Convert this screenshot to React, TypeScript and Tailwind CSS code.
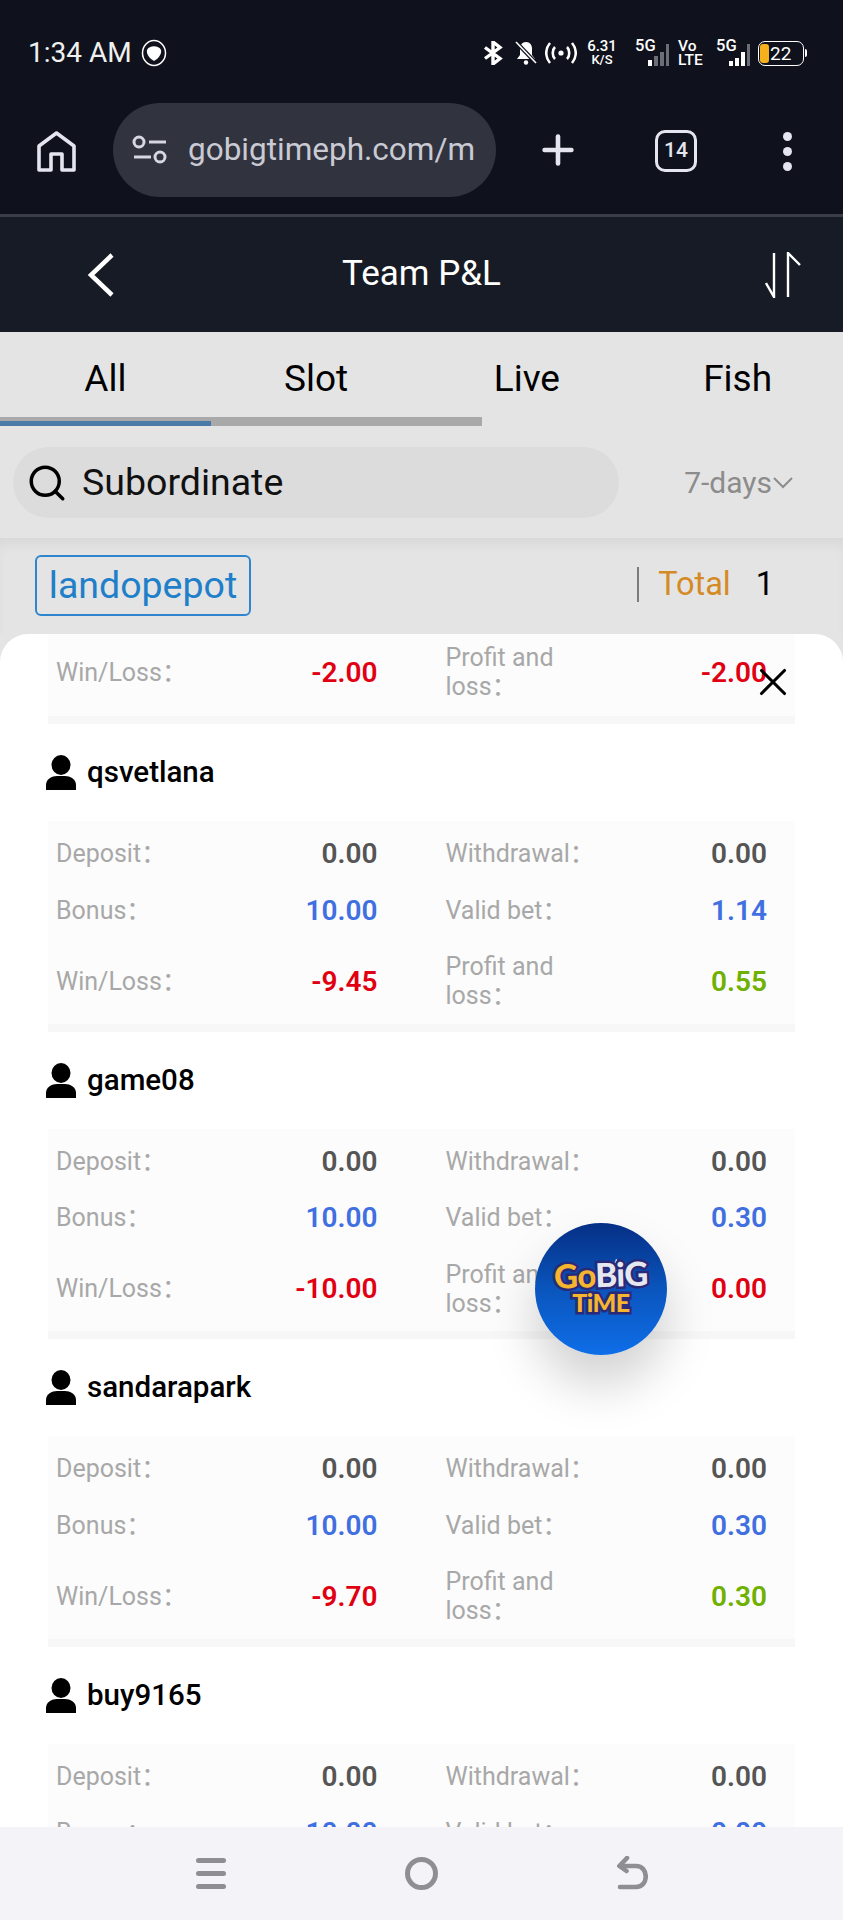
import React from 'react';
import { Search, X, Plus } from 'lucide-react';

type Cell = { label: string; value: string; color: string };

const gray = 'text-[#555555]';
const blue = 'text-[#3f6fe0]';
const red = 'text-[#e00012]';
const green = 'text-[#6fb000]';

const makeRows = (winLoss: string, validBet: string, profit: string, profitColor: string): Cell[][] => [
  [
    { label: 'Deposit', value: '0.00', color: gray },
    { label: 'Withdrawal', value: '0.00', color: gray },
  ],
  [
    { label: 'Bonus', value: '10.00', color: blue },
    { label: 'Valid bet', value: validBet, color: blue },
  ],
  [
    { label: 'Win/Loss', value: winLoss, color: red },
    { label: 'Profit and loss', value: profit, color: profitColor },
  ],
];

const members = [
  { name: 'qsvetlana', rows: makeRows('-9.45', '1.14', '0.55', green) },
  { name: 'game08', rows: makeRows('-10.00', '0.30', '0.00', red) },
  { name: 'sandarapark', rows: makeRows('-9.70', '0.30', '0.30', green) },
  { name: 'buy9165', rows: makeRows('-10.00', '0.00', '0.00', red).slice(0, 2) },
];

const StatRow = ({ cells }: { cells: Cell[] }) => (
  <div className="mb-[27.5px] grid grid-cols-2 gap-x-[68px] last:mb-0">
    {cells.map((cell) => (
      <div key={cell.label} className="flex items-center justify-between">
        <span className="max-w-[160px] text-[25px] leading-[29px] text-[#a8a8a8]">
          {cell.label}
          <span className="font-['Noto_Sans_CJK_SC',sans-serif] leading-none">{'\uFF1A'}</span>
        </span>
        <span className={`text-[28px] leading-[29px] font-semibold ${cell.color}`}>{cell.value}</span>
      </div>
    ))}
  </div>
);

const UserIcon = () => (
  <svg width="30" height="35" viewBox="0 0 30 35" fill="black">
    <ellipse cx="15" cy="10" rx="9.500" ry="10" />
    <path d="M0 35v-5c0-6 6-9 11-9h8c5 0 11 3 11 9v5z" />
  </svg>
);

const StatusBar = () => (
  <div className="flex h-[102px] items-center justify-between pt-[4px] pr-[36px] pl-[28px] text-white">
    <div className="flex items-center gap-[9px]">
      <span className="text-[28px] text-[#f0f0f0]">1:34 AM</span>
      <svg width="26" height="28" viewBox="0 0 26 28" fill="none">
        <ellipse cx="13" cy="14" rx="11.500" ry="12.500" stroke="white" strokeWidth="1.5" />
        <path d="M6 11c2-5 12-5 14 0 1 4-3 9-7 11-4-2-8-7-7-11z" fill="white" />
      </svg>
    </div>
    <div className="flex items-center">
      <svg width="20" height="24" viewBox="0 0 20 24" fill="none" stroke="white" strokeWidth="3.4" className="mr-[12px]">
        <path d="M2 6.5l15 11-7 5.5V1l7 5.5-15 11" />
      </svg>
      <svg width="22" height="24" viewBox="0 0 22 24" className="mr-[8px]">
        <path d="M11 1c-4 0-6 3-6 7v6l-3 4h18l-3-4V8c0-4-2-7-6-7z" fill="white" />
        <circle cx="11" cy="21.5" r="2.2" fill="white" />
        <path d="M1 1l20 21" stroke="#0f121c" strokeWidth="4" />
        <path d="M1 1l20 21" stroke="white" strokeWidth="1.6" />
      </svg>
      <svg width="32" height="24" viewBox="0 0 32 24" fill="none" stroke="white" strokeWidth="2.6" className="mr-[10px]">
        <circle cx="16" cy="12" r="2.6" fill="white" stroke="none" />
        <path d="M10 6c-3 3-3 9 0 12M22 6c3 3 3 9 0 12M5 2c-5 6-5 14 0 20M27 2c5 6 5 14 0 20" />
      </svg>
      <div className="mr-[18px] flex w-[30px] flex-col items-center text-[15px] leading-[14px] font-medium">
        <span>6.31</span>
        <span className="text-[13px]">K/S</span>
      </div>
      <div className="relative mr-[9px] h-[26px] w-[34px]">
        <span className="absolute -top-[2px] left-0 text-[16.5px] leading-[16px] font-medium">5G</span>
        <div className="absolute right-0 bottom-0 flex items-end gap-[2px]">
          <i className="h-[6px] w-[4px] bg-white" />
          <i className="h-[10px] w-[4px] bg-[#6b6e75]" />
          <i className="h-[14px] w-[4px] bg-[#6b6e75]" />
          <i className="h-[22px] w-[3px] bg-[#6b6e75]" />
        </div>
      </div>
      <div className="mr-[14px] flex w-[24px] flex-col text-[15.5px] leading-[14px] font-medium">
        <span>Vo</span>
        <span>LTE</span>
      </div>
      <div className="relative mr-[8px] h-[26px] w-[34px]">
        <span className="absolute -top-[2px] left-0 text-[16.5px] leading-[16px] font-medium">5G</span>
        <div className="absolute right-0 bottom-0 flex items-end gap-[2px]">
          <i className="h-[5px] w-[4px] bg-white" />
          <i className="h-[8px] w-[4px] bg-white" />
          <i className="h-[14px] w-[4px] bg-white" />
          <i className="h-[22px] w-[3px] bg-[#6b6e75]" />
        </div>
      </div>
      <div className="flex items-center">
        <div className="relative flex h-[25px] w-[46px] items-center rounded-[7px] border-[1.5px] border-white pl-[1px]">
          <i className="h-[19px] w-[9px] rounded-[3px] bg-[#f5b01c]" />
          <span className="ml-[1px] text-[19px] leading-none">22</span>
        </div>
        <i className="ml-[1px] h-[8px] w-[2px] rounded-r bg-white" />
      </div>
    </div>
  </div>
);

const BrowserBar = () => (
  <div className="flex h-[115px] items-start border-b-[3px] border-[#3a3d45] pt-[1px]">
    <div className="flex w-[113px] justify-start pt-[27px] pl-[37px]">
      <svg width="39" height="42" viewBox="0 0 39 42" fill="none" stroke="#e4e5ee" strokeWidth="3.6">
        <path d="M2 40V16L19.5 3 37 16v24H25V24H14v16z" strokeLinejoin="round" />
      </svg>
    </div>
    <div className="flex h-[94px] w-[383px] items-center rounded-full bg-[#31333f] pl-[19px]">
      <svg width="36" height="30" viewBox="0 0 36 30" fill="none" stroke="#d5d6df" strokeWidth="3">
        <circle cx="7" cy="7" r="5" />
        <path d="M17 7h17M2 22h17" />
        <circle cx="28" cy="22" r="5" />
      </svg>
      <span className="ml-[20px] text-[31.5px] whitespace-nowrap text-[#c9cad3]">gobigtimeph.com/m</span>
    </div>
    <Plus size={46} strokeWidth={2.4} className="mt-[24px] ml-[39px] text-[#e4e5ee]" />
    <div className="mt-[27px] ml-[74px] flex h-[42px] w-[42px] items-center justify-center rounded-[10px] border-[3.5px] border-[#e4e5ee] text-[21px] font-medium text-[#e4e5ee]">
      14
    </div>
    <div className="mt-[29px] ml-[86px] flex flex-col gap-[6px]">
      <i className="h-[9px] w-[9px] rounded-full bg-[#e4e5ee]" />
      <i className="h-[9px] w-[9px] rounded-full bg-[#e4e5ee]" />
      <i className="h-[9px] w-[9px] rounded-full bg-[#e4e5ee]" />
    </div>
  </div>
);

const Header = () => (
  <div className="grid h-[115px] grid-cols-[1fr_auto_1fr] items-center bg-[#171b25] pr-[42px] pl-[87px] text-white">
    <svg width="27" height="44" viewBox="0 0 27 44" fill="none" stroke="white" strokeWidth="4.5">
      <path d="M25 2L4 22l21 20" />
    </svg>
    <span className="-ml-[45px] text-[35px]">Team P&amp;L</span>
    <svg width="36" height="46" viewBox="0 0 36 46" fill="none" stroke="white" strokeWidth="2.4" className="justify-self-end">
      <path d="M9 1v44L1 31M23 45V1l12 12" />
    </svg>
  </div>
);

const FloatingLogo = () => (
  <div className="absolute top-[1223px] left-[535px] flex h-[132px] w-[132px] flex-col items-center justify-center overflow-hidden rounded-full bg-gradient-to-b from-[#062f85] via-[#0a55bd] to-[#0f6ee8] pb-[4px] font-['Lato',sans-serif] font-black shadow-[0_30px_50px_rgba(0,0,0,0.18)]">
    <span className="absolute top-[34px] left-[74px] text-[16px] leading-none text-white">★</span>
    <div className="-rotate-2 text-[33px] leading-[30px] tracking-[-0.5px] [paint-order:stroke_fill] [-webkit-text-stroke:5px_#2a2a78]">
      <span className="text-[#f6b52e]">Go</span>
      <span className="text-[#e6e8f0]">BiG</span>
    </div>
    <div className="text-[25px] leading-[26px] tracking-[-0.5px] text-[#f6b52e] [paint-order:stroke_fill] [-webkit-text-stroke:5px_#2a2a78]">
      TiME
    </div>
  </div>
);

const NavBar = () => (
  <div className="flex h-[93px] items-center justify-between bg-[#f3f3f8] pr-[195px] pb-[1px] pl-[196px]">
    <div className="flex flex-col gap-[8px]">
      <i className="h-[5px] w-[30px] rounded-full bg-[#8e8e93]" />
      <i className="h-[5px] w-[30px] rounded-full bg-[#8e8e93]" />
      <i className="h-[5px] w-[30px] rounded-full bg-[#8e8e93]" />
    </div>
    <div className="h-[33px] w-[33px] rounded-full border-[5px] border-[#8e8e93]" />
    <svg width="31" height="34" viewBox="0 0 31 34" fill="none" stroke="#8e8e93" strokeWidth="4.6" strokeLinecap="round">
      <path d="M3 31h16c13 0 13-21 0-21H3" />
      <path d="M10 2L2.500 10l7 5" />
    </svg>
  </div>
);

const App: React.FC = () => {
  return (
    <div className="relative flex h-[1920px] w-[843px] flex-col overflow-hidden bg-[#e4e4e4] font-['Roboto',sans-serif]">
      <div className="bg-[#0f121c]">
        <StatusBar />
        <BrowserBar />
      </div>
      <Header />

      <div className="bg-[#e4e4e4]">
        <div className="grid grid-cols-4 pt-[8px]">
          {['All', 'Slot', 'Live', 'Fish'].map((tab) => (
            <div key={tab} className="flex h-[77px] items-center justify-center text-[37px] text-black">
              {tab}
            </div>
          ))}
        </div>
        <div className="h-[9px] w-[482px] bg-[#a9a9a9] pt-[4px]">
          <div className="h-[5px] w-[211px] bg-[#4a7ba8]" />
        </div>
        <div className="flex items-center pt-[21px] pr-[50px] pb-[20px] pl-[13px]">
          <div className="flex h-[71px] w-[606px] items-center rounded-full bg-[#dcdcdc] pl-[13px]">
            <Search size={42} strokeWidth={2} className="text-black" />
            <span className="ml-[14px] text-[37.5px] text-[#111111]">Subordinate</span>
          </div>
          <span className="ml-auto text-[30px] text-[#8c8c8c]">7-days</span>
          <svg width="20" height="12" viewBox="0 0 20 12" fill="none" stroke="#8c8c8c" strokeWidth="2" className="ml-[1px]">
            <path d="M1 1l9 9 9-9" />
          </svg>
        </div>
        <div className="flex h-[96px] items-start bg-[#e4e4e4] pt-[17px] pr-[69px] pl-[35px] shadow-[inset_0_10px_14px_-6px_rgba(0,0,0,0.07)]">
          <div className="flex h-[61px] w-[216px] items-center justify-center rounded-[6px] border-[2.5px] border-[#2f86cf] text-[37.5px] text-[#1f7fc9]">
            landopepot
          </div>
          <div className="mt-[12px] ml-auto h-[35px] w-[2px] bg-[#7c7c7c]" />
          <span className="mt-[10px] ml-[19px] text-[32.5px] leading-[38px] text-[#d48a25]">Total</span>
          <span className="mt-[10px] ml-[25px] text-[32.5px] leading-[38px] text-black">1</span>
        </div>
      </div>

      <div className="relative min-h-0 flex-1 overflow-hidden rounded-t-[28px] bg-white">
        <div className="px-[48px]">
          <div className="border-b-[8px] border-[#f7f7f7] bg-[#fcfcfc] pt-[9px] pr-[28px] pb-[15px] pl-[8px]">
            <StatRow
              cells={[
                { label: 'Win/Loss', value: '-2.00', color: red },
                { label: 'Profit and loss', value: '-2.00', color: red },
              ]}
            />
          </div>
          {members.map((member) => (
            <div key={member.name}>
              <div className="-ml-[2px] flex h-[97px] items-center gap-[11px]">
                <UserIcon />
                <span className="text-[29.500px] font-medium text-black">{member.name}</span>
              </div>
              <div className="border-b-[8px] border-[#f7f7f7] bg-[#fcfcfc] pt-[18px] pr-[28px] pb-[13.500px] pl-[8px]">
                {member.rows.map((row) => (
                  <StatRow key={row[0].label} cells={row} />
                ))}
              </div>
            </div>
          ))}
        </div>
        <X size={46} strokeWidth={1.6} className="absolute top-[25px] right-[47px] text-black" />
      </div>

      <NavBar />
      <FloatingLogo />
    </div>
  );
};

export default App;
